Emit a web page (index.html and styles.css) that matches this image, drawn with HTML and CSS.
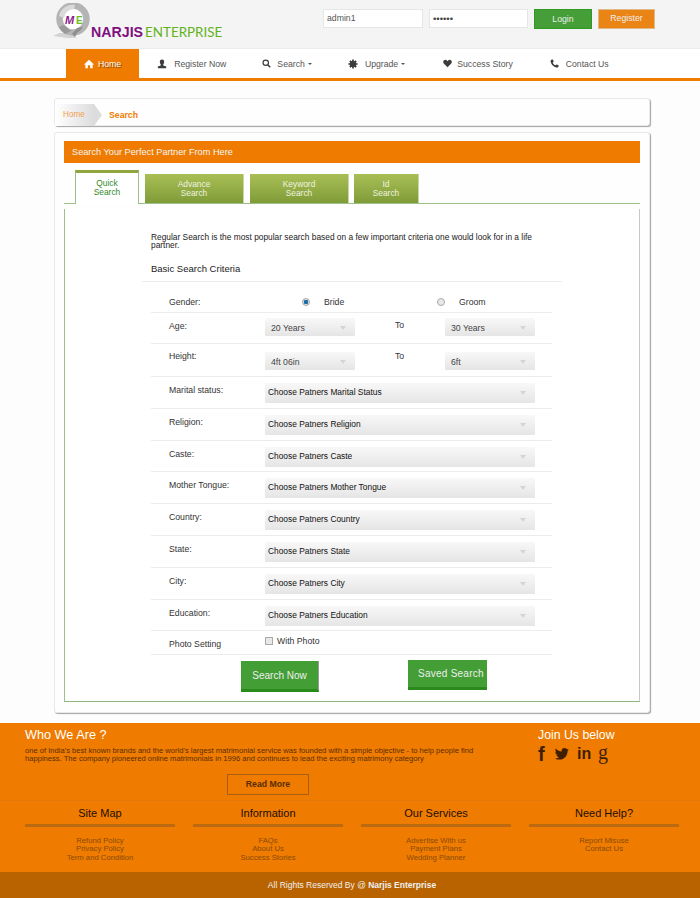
FILE: index.html
```html
<!DOCTYPE html>
<html lang="en">
<head>
    <meta charset="UTF-8">
    <title>Narjis Enterprise - Search</title>
    <link rel="stylesheet" href="styles.css">
</head>
<body>
    <!-- Top strip with logo and login -->
    <div class="top">
        <div class="logo">
            <svg class="logo-mark" width="38" height="36" viewBox="0 0 38 36">
                <path d="M6 30 L0 33 L14 35 L24 35 L16 30 Z" fill="#d4d4d4"/>
                <circle cx="20" cy="16" r="13.5" fill="#fff" stroke="#b4b4b4" stroke-width="6.5"/>
                <path d="M6 13 A14 14 0 0 1 22 2 L21 6 A10 10 0 0 0 11 15 Z" fill="#dadada"/>
                <path d="M30 24 A14 14 0 0 1 24 30 L22 34 L19 31 L24 25 Z" fill="#8f8f8f"/>
                <path d="M12 31 A16 16 0 0 1 6 24 L11 22 L18 28 Z" fill="#9a9a9a"/>
                <text x="12" y="21" class="logo-m">M</text>
                <text x="23" y="21" class="logo-e">E</text>
            </svg>
            <div class="logo-text"><b>NARJIS</b><span>ENTERPRISE</span></div>
        </div>
        <div class="login">
            <div class="field">admin1</div>
            <div class="field field-pass">&#8226;&#8226;&#8226;&#8226;&#8226;&#8226;</div>
            <div class="btn-login">Login</div>
            <div class="btn-register">Register</div>
        </div>
    </div>

    <div class="nav">
        <a class="nav-item active">
            <svg class="ico" viewBox="0 0 12 12"><path d="M6 1 L12 6.5 L10.4 6.5 L10.4 11 L7.4 11 L7.4 7.6 L4.6 7.6 L4.6 11 L1.6 11 L1.6 6.5 L0 6.5 Z"/></svg>
            <span>Home</span>
        </a>
        <a class="nav-item">
            <svg class="ico" viewBox="0 0 12 12"><path d="M6 0.5 C8 0.5 8.7 2 8.6 3.6 C8.5 5 8 6 7.4 6.8 L7.6 7.8 L11 9 L11 11 L1 11 L1 9 L4.4 7.8 L4.6 6.8 C4 6 3.5 5 3.4 3.6 C3.3 2 4 0.5 6 0.5 Z"/></svg>
            <span>Register Now</span>
        </a>
        <a class="nav-item">
            <svg class="ico ico-s" viewBox="0 0 12 12"><circle cx="5" cy="5" r="3.6" fill="none" stroke="#3c3c3c" stroke-width="1.6"/><path d="M7.6 7.6 L11 11" stroke="#3c3c3c" stroke-width="2"/></svg>
            <span>Search</span><i class="caret"></i>
        </a>
        <a class="nav-item nav-upgrade">
            <svg class="ico" viewBox="0 0 12 12"><circle cx="6" cy="6" r="4"/><path d="M5 0.5h2v2h-2zM5 9.5h2v2h-2zM0.5 5h2v2h-2zM9.5 5h2v2h-2zM1.5 3l1.5-1.5 1.5 1.5-1.5 1.5zM7.5 3l1.5-1.5 1.5 1.5-1.5 1.5zM1.5 9l1.5-1.5 1.5 1.5-1.5 1.5zM7.5 9l1.5-1.5 1.5 1.5-1.5 1.5z"/></svg>
            <span>Upgrade</span><i class="caret"></i>
        </a>
        <a class="nav-item nav-story">
            <svg class="ico ico-s" viewBox="0 0 12 12"><path d="M6 11 L1 6 C-0.5 4 0.5 1 3 1 C4.5 1 5.5 2 6 3 C6.5 2 7.5 1 9 1 C11.5 1 12.5 4 11 6 Z"/></svg>
            <span>Success Story</span>
        </a>
        <a class="nav-item">
            <svg class="ico ico-w" viewBox="0 0 12 12"><path d="M1.5 1 L4 0.5 L5 3.5 L3.6 4.6 C4.2 6.2 5.6 7.8 7.4 8.4 L8.6 7.2 L11.5 8.4 L11 11 C10 11.6 8 11.6 5.4 10 C3 8.4 1 5.6 0.8 3.4 C0.8 2.4 1 1.6 1.5 1 Z"/></svg>
            <span>Contact Us</span>
        </a>
    </div>

    <div class="page">
        <div class="crumbs box">
            <span class="crumb-home">Home</span>
            <span class="crumb-now">Search</span>
        </div>

        <div class="main box">
            <div class="main-title">Search Your Perfect Partner From Here</div>

            <div class="tabs">
                <div class="tab tab-on">Quick<br>Search</div>
                <div class="tab tab-adv">Advance<br>Search</div>
                <div class="tab tab-key">Keyword<br>Search</div>
                <div class="tab tab-id">Id<br>Search</div>
            </div>

            <div class="panel">
                <p class="intro">Regular Search is the most popular search based on a few important criteria one would look for in a life partner.</p>
                <h3 class="criteria">Basic Search Criteria</h3>

                <div class="form">
                    <div class="row row-gender">
                        <label>Gender:</label>
                        <div class="gender">
                            <span class="opt opt-bride"><input type="radio" name="g" checked><span>Bride</span></span>
                            <span class="opt"><input type="radio" name="g"><span>Groom</span></span>
                        </div>
                    </div>
                    <div class="row row-age">
                        <label>Age:</label>
                        <div class="range">
                            <div class="select small">20 Years</div>
                            <span class="to">To</span>
                            <div class="select small">30 Years</div>
                        </div>
                    </div>
                    <div class="row row-height">
                        <label>Height:</label>
                        <div class="range">
                            <div class="select small">4ft 06in</div>
                            <span class="to">To</span>
                            <div class="select small">6ft</div>
                        </div>
                    </div>
                    <div class="row"><label>Marital status:</label><div class="select">Choose Patners Marital Status</div></div>
                    <div class="row"><label>Religion:</label><div class="select">Choose Patners Religion</div></div>
                    <div class="row row-31"><label>Caste:</label><div class="select">Choose Patners Caste</div></div>
                    <div class="row"><label>Mother Tongue:</label><div class="select">Choose Patners Mother Tongue</div></div>
                    <div class="row"><label>Country:</label><div class="select">Choose Patners Country</div></div>
                    <div class="row"><label>State:</label><div class="select">Choose Patners State</div></div>
                    <div class="row"><label>City:</label><div class="select">Choose Patners City</div></div>
                    <div class="row row-31"><label>Education:</label><div class="select">Choose Patners Education</div></div>
                    <div class="row row-photo">
                        <label>Photo Setting</label>
                        <span class="photo"><input type="checkbox"><span>With Photo</span></span>
                    </div>
                </div>

                <div class="actions">
                    <div class="btn-green btn-search">Search Now</div>
                    <div class="btn-green btn-saved">Saved Search</div>
                </div>
            </div>
        </div>
    </div>

    <div class="footer">
        <div class="foot-top">
            <div class="about">
                <h2>Who We Are ?</h2>
                <p>one of India's best known brands and the world's largest matrimonial service was founded with a simple objective - to help people find happiness. The company pioneered online matrimonials in 1996 and continues to lead the exciting matrimony category</p>
                <div class="read-more">Read More</div>
            </div>
            <div class="join">
                <h2>Join Us below</h2>
                <div class="social">
                    <span class="soc-f">f</span>
                    <svg class="soc-t" width="20" height="16" viewBox="0 0 20 17"><path d="M19.5 2 C18.8 2.3 18.1 2.5 17.3 2.6 C18.1 2.1 18.7 1.4 19 0.5 C18.2 1 17.4 1.3 16.5 1.5 C15.7 0.6 14.7 0.1 13.5 0.1 C11.2 0.1 9.4 2 9.4 4.2 C9.4 4.5 9.4 4.8 9.5 5.1 C6.1 4.9 3.1 3.3 1.1 0.8 C0.7 1.4 0.5 2.1 0.5 2.9 C0.5 4.3 1.2 5.6 2.3 6.3 C1.6 6.3 1 6.1 0.5 5.8 C0.5 7.9 1.9 9.6 3.8 10 C3.2 10.2 2.5 10.2 1.9 10.1 C2.4 11.8 4 13 5.8 13 C4 14.4 1.9 15 0 14.8 C1.9 16 4 16.5 6.3 16.5 C13.8 16.5 17.9 10.3 17.9 4.9 L17.9 4.4 C18.5 3.9 19.1 3 19.5 2 Z"/></svg>
                    <span class="soc-in">in</span>
                    <span class="soc-g">g</span>
                </div>
            </div>
        </div>
        <div class="foot-cols">
            <div class="foot-col">
                <h4>Site Map</h4>
                <a>Refund Policy</a>
                <a>Privacy Policy</a>
                <a>Term and Condition</a>
            </div>
            <div class="foot-col">
                <h4>Information</h4>
                <a>FAQs</a>
                <a>About Us</a>
                <a>Success Stories</a>
            </div>
            <div class="foot-col">
                <h4>Our Services</h4>
                <a>Advertise With us</a>
                <a>Payment Plans</a>
                <a>Wedding Planner</a>
            </div>
            <div class="foot-col">
                <h4>Need Help?</h4>
                <a>Report Misuse</a>
                <a>Contact Us</a>
            </div>
        </div>
        <div class="copy">All Rights Reserved By @ <b>Narjis Enterprise</b></div>
    </div>
</body>
</html>
```

FILE: styles.css
```css
* {
    box-sizing: border-box;
}

html, body {
    height: 898px;
    overflow: hidden;
}

body {
    margin: 0;
    font-family: "Liberation Sans", Arial, sans-serif;
    font-size: 8.7px;
    color: #333;
    background-color: #fdfdfd;
}

/* top strip */
.top {
    height: 49px;
    background-color: #f4f4f4;
    border-bottom: 1px solid #ececec;
    display: flex;
    justify-content: space-between;
    padding: 0 45px 0 53px;
}

.logo {
    display: flex;
    align-items: flex-start;
    padding-top: 3px;
}

.logo-m {
    font: bold italic 11px "Liberation Sans", sans-serif;
    fill: #8a1a8c;
}

.logo-e {
    font: bold 10px "Liberation Sans", sans-serif;
    fill: #6fbf1f;
}

.logo-text {
    margin-top: 22px;
    line-height: 14px;
    white-space: nowrap;
}

.logo-text b {
    font-size: 14.2px;
    color: #800f80;
}

.logo-text span {
    font-family: Lato, sans-serif;
    font-weight: 400;
    font-size: 13.4px;
    color: #62b21c;
    margin-left: 2px;
}

.login {
    display: flex;
    gap: 6px;
    padding-top: 9px;
    align-items: flex-start;
}

.field {
    width: 100px;
    height: 19px;
    background-color: #fff;
    border: 1px solid #e6e6e6;
    padding-left: 3px;
    line-height: 17px;
    color: #555;
}

.field-pass {
    width: 99px;
    color: #444;
    font-size: 9.5px;
}

.btn-login, .btn-register {
    height: 20px;
    line-height: 19px;
    text-align: center;
    color: #eee;
}

.btn-login {
    width: 58px;
    background-color: #459e38;
    border: 1px solid #2f9a20;
}

.btn-register {
    width: 57px;
    background-color: #ea8414;
    border: 1px solid #e0b98a;
    line-height: 16px;
}

/* nav */
.nav {
    height: 32px;
    background-color: #fff;
    border-bottom: 3px solid #ef7c00;
    padding-left: 66px;
    display: flex;
}

.nav-item {
    height: 29px;
    padding: 0 18px;
    display: flex;
    align-items: center;
    color: #555;
    white-space: nowrap;
}

.nav-upgrade {
    padding-right: 20px;
}

.nav-story {
    padding-right: 19px;
}

.nav-story .ico {
    margin-right: 5px;
}

.nav-item.active {
    background-color: #ef7c00;
    color: #fff;
    text-shadow: 1px 1px 1px #7a4000;
}

.nav-item.active .ico {
    fill: #fff;
    margin-right: 4px;
}

.ico {
    width: 10px;
    height: 10px;
    fill: #3c3c3c;
    margin-right: 7px;
    flex: none;
}

.ico-s {
    margin-right: 6px;
    width: 9px;
    height: 9px;
}

.ico-w {
    margin-right: 7px;
    width: 9px;
    height: 9px;
}

.caret {
    display: inline-block;
    width: 0;
    height: 0;
    margin-left: 3px;
    border-top: 2.5px solid #555;
    border-left: 2.5px solid transparent;
    border-right: 2.5px solid transparent;
}

/* page */
.page {
    width: 596px;
    margin: 17px 0 0 54px;
}

.box {
    background-color: #fefefe;
    border: 1px solid #e9e9e9;
    border-radius: 3px;
    box-shadow: 1px 1px 1px #a5a5a5;
}

.crumbs {
    height: 28px;
    padding-top: 5px;
    display: flex;
    align-items: center;
}

.crumb-home {
    width: 39px;
    height: 22px;
    line-height: 22px;
    padding-left: 8px;
    font-size: 8.2px;
    color: #f0a050;
    background: linear-gradient(to right, #fff, #dcdcdc);
    position: relative;
}

.crumb-home::after {
    content: "";
    position: absolute;
    left: 39px;
    top: 0;
    border-left: 8px solid #dcdcdc;
    border-top: 11px solid transparent;
    border-bottom: 11px solid transparent;
}

.crumb-now {
    margin-left: 15px;
    color: #ef7c00;
    font-weight: bold;
}

.main {
    height: 581px;
    margin-top: 6px;
    padding: 8px 9px 0;
}

.main-title {
    height: 22px;
    line-height: 22px;
    padding-left: 8px;
    background-color: #ef7c00;
    color: #f5f5f5;
    font-size: 9.2px;
}

.tabs {
    height: 34px;
    margin-top: 7px;
    padding-left: 11px;
    display: flex;
    align-items: flex-end;
    gap: 6px;
    border-bottom: 1px solid #9dc08b;
}

.tab {
    height: 29px;
    padding-top: 6px;
    font-size: 8.4px;
    line-height: 9px;
    text-align: center;
    color: #eef3e0;
    background: linear-gradient(to bottom, #a9bf55, #7f9c38);
    border-right: 1px solid #c8d8a0;
}

.tab-on {
    width: 64px;
    height: 34px;
    padding-top: 6px;
    background: #fff;
    color: #2f8a2a;
    border-top: 3px solid #8fa63e;
    border-left: 1px solid #9dc08b;
    border-right: 1px solid #9dc08b;
    margin-bottom: -1px;
}

.tab-adv, .tab-key {
    width: 99px;
}

.tab-id {
    width: 65px;
    margin-left: -1px;
}

.panel {
    height: 493px;
    margin-top: 5px;
    background-color: #fff;
    border-left: 1px solid #9dc08b;
    border-right: 1px solid #c8c8c8;
    border-bottom: 1px solid #8fb480;
    padding: 24px 0 0 86px;
}

.intro {
    margin: 0;
    width: 395px;
    font-size: 8.37px;
    line-height: 8px;
    color: #222;
}

.criteria {
    margin: 13px 0 0 -9px;
    width: 420px;
    height: 20px;
    padding-left: 9px;
    border-bottom: 1px solid #ececec;
    font-size: 9.5px;
    font-weight: normal;
    line-height: 14px;
    color: #222;
}

.form {
    width: 401px;
}

.row {
    height: 32px;
    padding-top: 6px;
    display: grid;
    grid-template-columns: 114px 270px;
    align-items: start;
    border-bottom: 1px solid #ececec;
}

.row label {
    padding-left: 18px;
    line-height: 14px;
    color: #333;
}

.row-31 {
    height: 31px;
}

.row-gender {
    height: 31px;
    padding-top: 13px;
}

.row-age {
    height: 31px;
    padding-top: 5px;
}

.row-age label {
    margin-top: 1px;
}

.row-height {
    height: 33px;
    padding-top: 5px;
}

.row-height .select {
    margin-top: 3px;
}

.row-photo {
    height: 24px;
    padding-top: 6px;
}

.gender {
    display: flex;
    line-height: 14px;
}

.opt {
    display: flex;
    align-items: center;
    padding-left: 37px;
    width: 135px;
}

.opt input, .photo input {
    appearance: none;
    width: 8px;
    height: 8px;
    margin: 0 14px 0 0;
    border: 1px solid #aaa;
    background: #e8e8e8;
}

.opt input {
    border-radius: 50%;
}

.opt input:checked {
    background: radial-gradient(circle, #1a6fa8 0 2px, #ddd 2.5px);
}

.range {
    display: flex;
    align-items: flex-start;
}

.to {
    width: 90px;
    padding-left: 40px;
    line-height: 14px;
}

.select {
    height: 20px;
    line-height: 19px;
    padding-left: 3px;
    color: #111;
    font-size: 8.4px;
    background: linear-gradient(to bottom, #f8f8f8, #e5e5e5);
    border-radius: 1px;
    position: relative;
}

.select::after {
    content: "";
    position: absolute;
    right: 9px;
    top: 8px;
    border-top: 4px solid #d4d4d4;
    border-left: 3px solid transparent;
    border-right: 3px solid transparent;
}

.select.small {
    width: 90px;
    height: 18px;
    line-height: 20px;
    padding-left: 6px;
    color: #444;
    font-size: 8.7px;
}

.photo {
    display: flex;
    align-items: center;
    height: 10px;
    margin-top: -1px;
}

.photo input {
    margin-right: 4px;
}

.actions {
    display: flex;
    align-items: flex-start;
    padding: 5px 0 0 90px;
}

.btn-green {
    background-color: #449e36;
    color: #eee;
    text-align: center;
    font-size: 10px;
    border-bottom: 3px solid #2a8a1c;
}

.btn-search {
    width: 78px;
    height: 31px;
    margin-top: 1px;
    line-height: 29px;
    border-right: 1px solid #999;
}

.btn-saved {
    width: 79px;
    height: 30px;
    margin-left: 89px;
    padding-left: 10px;
    text-align: left;
    line-height: 28px;
    letter-spacing: 0.25px;
}

/* footer */
.footer {
    margin-top: 10px;
    height: 175px;
    background-color: #ef7c00;
    position: relative;
}

.foot-top {
    height: 78px;
    display: flex;
    padding: 5px 0 0 25px;
    border-bottom: 1px solid #e2780a;
}

.about {
    width: 513px;
}

.footer h2 {
    margin: 0;
    font-size: 12.7px;
    font-weight: normal;
    line-height: 14px;
    color: #fff;
}

.join h2 {
    font-size: 12.3px;
}

.about p {
    margin: 5px 0 0;
    width: 470px;
    font-size: 7.6px;
    line-height: 8px;
    color: #5a2c00;
}

.read-more {
    width: 82px;
    height: 21px;
    margin: 11px 0 0 202px;
    border: 1px solid #a85f10;
    line-height: 19px;
    text-align: center;
    font-weight: bold;
    color: #5a2c00;
}

.social {
    display: flex;
    align-items: center;
    height: 18px;
    margin-top: 3px;
    color: #3f1f00;
}

.soc-f {
    font-size: 20px;
    font-weight: bold;
    width: 17px;
}

.soc-t {
    fill: #3f1f00;
    width: 14px;
    margin-right: 8px;
}

.soc-in {
    font-size: 16px;
    font-weight: bold;
    width: 21px;
}

.soc-g {
    font-family: "Liberation Serif", serif;
    font-size: 20px;
    margin-top: -4px;
}

.foot-cols {
    display: grid;
    grid-template-columns: repeat(4, 150px);
    gap: 18px;
    padding: 5px 0 0 25px;
}

.foot-col {
    text-align: center;
    line-height: 8.3px;
    font-size: 7.7px;
}

.foot-col h4 {
    margin: 0 0 10px;
    height: 21px;
    line-height: 14px;
    font-size: 11px;
    font-weight: normal;
    color: #1c0e00;
    border-bottom: 3px solid #bb6a10;
}

.foot-col a {
    display: block;
    color: #8a4a08;
}

.copy {
    position: absolute;
    left: 0;
    right: 0;
    bottom: 0;
    height: 26px;
    line-height: 26px;
    text-align: center;
    padding-left: 4px;
    font-size: 8.5px;
    background-color: #b86300;
    color: #f0f0f0;
}
```
